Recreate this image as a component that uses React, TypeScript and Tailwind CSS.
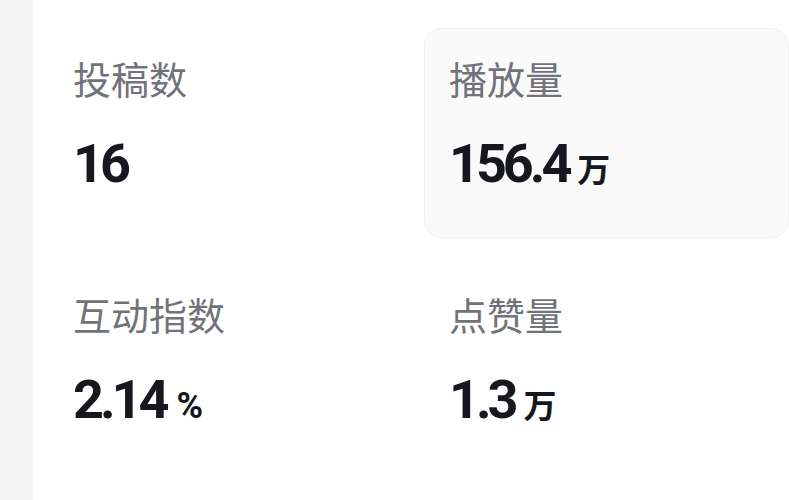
import React from 'react';

interface Stat {
  id: string;
  label: string;
  value: string;
  unit: string;
  active?: boolean;
}

const stats: Stat[] = [
  { id: 'posts', label: '投稿数', value: '16', unit: '' },
  { id: 'plays', label: '播放量', value: '156.4', unit: '万', active: true },
  { id: 'engage', label: '互动指数', value: '2.14', unit: '%' },
  { id: 'likes', label: '点赞量', value: '1.3', unit: '万' },
];

function StatCard({ stat }: { stat: Stat }) {
  return (
    <div
      className={
        'h-[210px] rounded-[18px] border pt-[23px] px-[24px] ' +
        (stat.active ? 'bg-[#fafafa] border-[#f0f0f0]' : 'bg-white border-transparent')
      }
    >
      <p className="text-[38px] leading-[52px] text-[#717379] font-['Noto_Sans_CJK_SC',sans-serif]">
        {stat.label}
      </p>
      <div className="mt-[30px] flex items-baseline h-[60px] text-[#16181e]">
        <span className="text-[54px] leading-[60px] font-bold tracking-[-0.075em] font-['Roboto',sans-serif]">
          {stat.value}
        </span>
        {stat.unit === '%' && (
          <span className="ml-[11px] text-[36px] font-bold tracking-[-0.02em] font-['Roboto',sans-serif]">%</span>
        )}
        {stat.unit === '万' && (
          <span className="ml-[9px] text-[33px] font-semibold font-['Noto_Sans_CJK_SC',sans-serif]">万</span>
        )}
      </div>
    </div>
  );
}

export default function App() {
  return (
    <div className="flex h-[500px] w-full overflow-hidden">
      <div className="w-[33px] shrink-0 bg-[#f3f3f3]" />
      <div className="flex-1 bg-white pl-[15px] pt-[28px]">
        <div className="grid grid-cols-2 gap-x-[11px] gap-y-[26px]">
          {stats.map((s) => (
            <StatCard key={s.id} stat={s} />
          ))}
        </div>
      </div>
    </div>
  );
}
